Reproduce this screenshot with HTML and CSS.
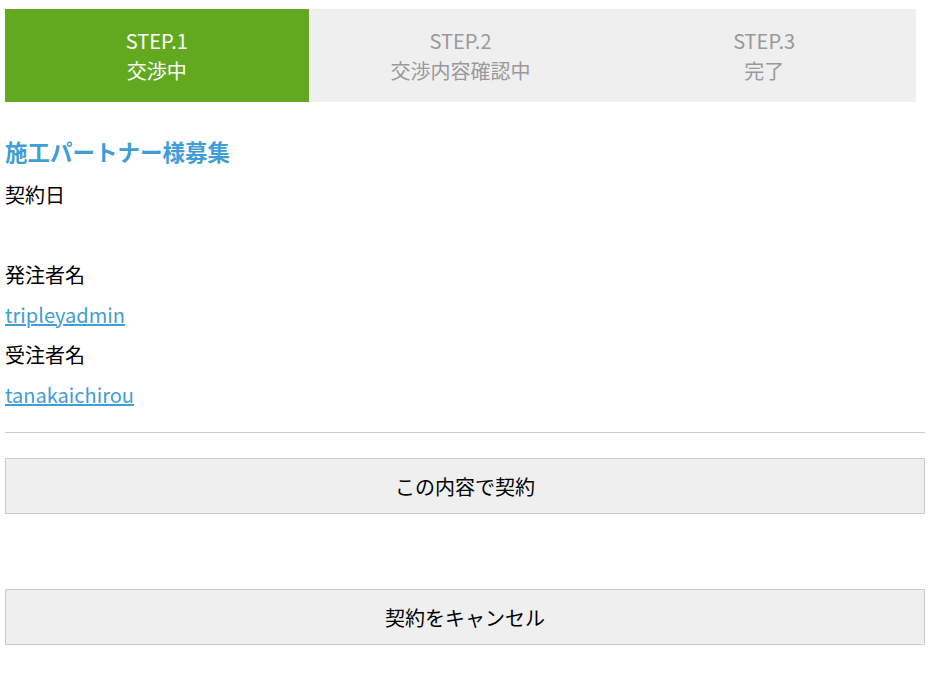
FILE: index.html
```html
<!DOCTYPE html>
<html lang="ja">
<head>
<meta charset="utf-8">
<title>契約</title>
<link rel="stylesheet" href="styles.css">
</head>
<body>
<div class="page">
  <div class="steps">
    <div class="step active"><span>STEP.1</span><span>交渉中</span></div>
    <div class="step"><span>STEP.2</span><span>交渉内容確認中</span></div>
    <div class="step"><span>STEP.3</span><span>完了</span></div>
  </div>
  <h2 class="title">施工パートナー様募集</h2>
  <dl class="info">
    <dt class="row">契約日</dt>
    <dd class="row"></dd>
    <dt class="row">発注者名</dt>
    <dd class="row"><a href="#">tripleyadmin</a></dd>
    <dt class="row">受注者名</dt>
    <dd class="row"><a href="#">tanakaichirou</a></dd>
  </dl>
  <hr class="divider">
  <button class="btn" type="button">この内容で契約</button>
  <button class="btn btn-cancel" type="button">契約をキャンセル</button>
</div>
</body>
</html>
```

FILE: styles.css
```css
* { box-sizing: border-box; }
html, body { margin: 0; padding: 0; background: #fff; }
body {
  font-family: "Noto Sans CJK JP", "Noto Sans", sans-serif;
  color: #000;
  font-size: 20px;
}
.page {
  width: 920px;
  margin: 0 0 0 5px;
  padding-top: 9px;
  padding-bottom: 60px;
}
.steps {
  display: flex;
  width: 911px;
  height: 93px;
  background: #efefef;
}
.step {
  flex: 1;
  display: flex;
  flex-direction: column;
  align-items: center;
  justify-content: center;
  color: #999;
  font-size: 20px;
  line-height: 30px;
}
.step.active {
  background: #62a91f;
  color: #fff;
}
.title {
  margin: 29px 0 4px;
  font-size: 22.5px;
  line-height: 40px;
  font-weight: bold;
  color: #3f9dd8;
}
.info { margin: 0; }
.row {
  margin: 0;
  height: 40px;
  line-height: 40px;
}
.row a { color: #3f9dd8; text-decoration: underline; }
.divider {
  margin: 17px 0 25px;
  border: 0;
  border-top: 1px solid #cccccc;
  height: 0;
}
.btn {
  display: block;
  width: 100%;
  height: 56px;
  background: #efefef;
  border: 1px solid #cccccc;
  font-family: inherit;
  font-size: 20px;
  color: #000;
  padding: 0;
  cursor: pointer;
}
.btn-cancel { margin-top: 75px; }
```
